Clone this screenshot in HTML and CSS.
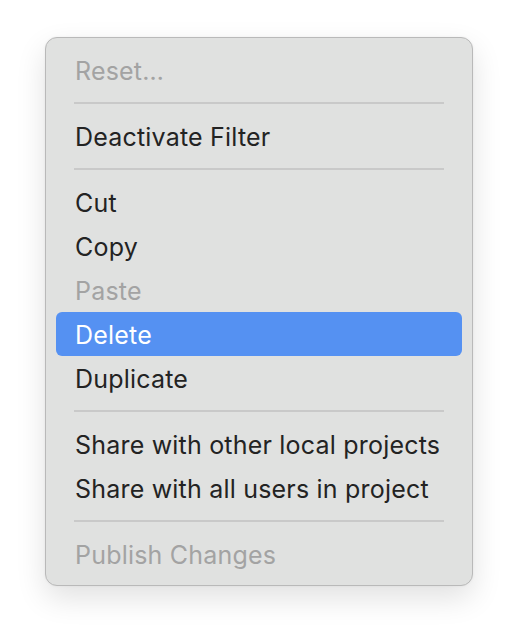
FILE: index.html
```html
<!DOCTYPE html>
<html>
<head>
<meta charset="utf-8">
<link rel="stylesheet" href="styles.css">
</head>
<body>
<div class="menu">
  <div class="item disabled">Reset…</div>
  <div class="sep"></div>
  <div class="item">Deactivate Filter</div>
  <div class="sep"></div>
  <div class="item">Cut</div>
  <div class="item">Copy</div>
  <div class="item disabled">Paste</div>
  <div class="item active">Delete</div>
  <div class="item">Duplicate</div>
  <div class="sep"></div>
  <div class="item">Share with other local projects</div>
  <div class="item">Share with all users in project</div>
  <div class="sep"></div>
  <div class="item disabled">Publish Changes</div>
</div>
</body>
</html>
```

FILE: styles.css
```css
html, body {
  margin: 0;
  padding: 0;
  background: #ffffff;
}
body {
  width: 518px;
  height: 640px;
  font-family: Inter, "Liberation Sans", sans-serif;
}
.menu {
  position: relative;
  margin: 37px 0 0 45px;
  box-sizing: border-box;
  width: 428px;
  height: 549px;
  padding: 10px 10px 9px 10px;
  background: #e0e1e0;
  border: 1px solid #b9b9b9;
  border-radius: 12px;
  box-shadow: 0 12px 30px rgba(0,0,0,0.12), 0 0 3px rgba(0,0,0,0.05);
  display: flex;
  flex-direction: column;
}
.item {
  box-sizing: border-box;
  height: 44px;
  padding-top: 2px;
  line-height: 42px;
  padding-left: 19px;
  font-size: 25px;
  letter-spacing: 0.2px;
  color: #232323;
  border-radius: 6px;
  white-space: nowrap;
}
.item.disabled {
  color: #a3a3a3;
}
.item.active {
  background: #5591f2;
  color: #ffffff;
}
.sep {
  height: 22px;
  margin: 0 18px 0 18px;
  display: flex;
  align-items: center;
}
.sep::before {
  content: "";
  flex: 1;
  height: 2px;
  background: #c9c9c9;
}
```
